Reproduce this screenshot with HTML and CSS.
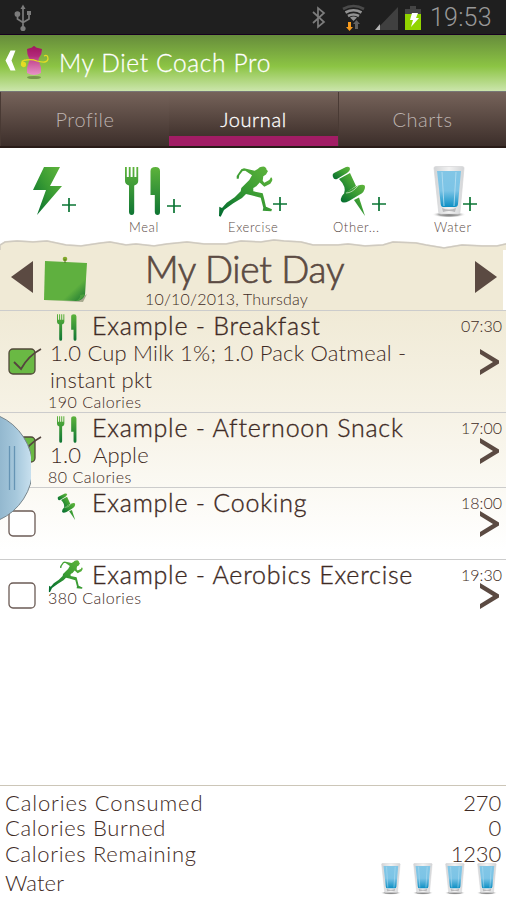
FILE: index.html
```html
<!DOCTYPE html>
<html lang="en">
<head>
<meta charset="utf-8">
<title>My Diet Coach Pro</title>
<link rel="stylesheet" href="styles.css">
</head>
<body>
<svg class="defs" width="0" height="0" aria-hidden="true">
  <defs>
    <linearGradient id="leaf" x1="1" y1="0" x2="0" y2="1"><stop offset="0" stop-color="#62b63d"/><stop offset=".45" stop-color="#3a9c33"/><stop offset="1" stop-color="#006a30"/></linearGradient>
    <linearGradient id="leafV" x1="0" y1="0" x2="0" y2="1"><stop offset="0" stop-color="#5db33b"/><stop offset="1" stop-color="#0f7534"/></linearGradient>
    <linearGradient id="aqua" x1="0" y1="0" x2="0" y2="1"><stop offset="0" stop-color="#82c6e6"/><stop offset=".55" stop-color="#7cc4e6"/><stop offset="1" stop-color="#0c8fc4"/></linearGradient>
    <linearGradient id="rim" x1="0" y1="0" x2="1" y2="0"><stop offset="0" stop-color="#d2d4d6"/><stop offset=".5" stop-color="#f2f2f2"/><stop offset="1" stop-color="#d2d4d6"/></linearGradient>
    <radialGradient id="shade"><stop offset="0" stop-color="#666"/><stop offset=".6" stop-color="#aaa"/><stop offset="1" stop-color="#fff" stop-opacity="0"/></radialGradient>
    <linearGradient id="pink" x1="0" y1="0" x2="0" y2="1"><stop offset="0" stop-color="#a0145f"/><stop offset=".35" stop-color="#b3297a"/><stop offset=".5" stop-color="#c54b94"/><stop offset="1" stop-color="#e794c6"/></linearGradient>
    <linearGradient id="note" x1="0" y1="0" x2="1" y2="1"><stop offset="0" stop-color="#5fb03f"/><stop offset=".7" stop-color="#5fb03f"/><stop offset=".92" stop-color="#278034"/><stop offset="1" stop-color="#6abf45"/></linearGradient>
    <linearGradient id="knob" x1="0" y1="0" x2="1" y2="0"><stop offset="0" stop-color="#92b7ce"/><stop offset=".5" stop-color="#a6c8dc"/><stop offset="1" stop-color="#cbe2f0"/></linearGradient>
    <symbol id="cutlery" viewBox="0 0 36 48"><path fill="url(#leafV)" d="M0 0h1.800v10h2V0h1.800v10h2V0h1.800v10h2V0h1.800v14q0 3-4 4.500V45q0 3-2.500 3t-2.700-3V18.500Q0 17 0 14zM25.500 4q0-4 5-4 4.500 0 4.500 4v41q0 3-2.500 3t-2.700-3V28h-4.300z"/></symbol>
    <symbol id="pin" viewBox="0 0 34 50"><g fill="url(#leaf)"><path d="M1 11Q0 8 2 7L14 1q4-1 4 2 0 2-3 4L5 13Q2 14 1 11z"/><path d="M7 13L18 7l6 13-12 8q3-7-5-15z"/><path d="M9 35Q8 30 14 26L25 20q8-3 8 1 0 5-6 8L17 35q-6 3-8 0z"/><path d="M22 34l5-2.500L33 50z"/></g><path d="M14 27q6 0 12-7" fill="none" stroke="#b6dbb0" stroke-width=".9"/></symbol>
    <symbol id="runner" viewBox="0 0 54 52"><path fill="url(#leaf)" d="M38.700 3Q41 .5 43 .7q3-.7 4.300 1.800l.4 1.500 1.300 1-2 3.500-2.700 1.800-.6 4.400 1.600 2 5-2.700 1.700-2.700q2 1 1 3.700l-1.700 2.800-6 3-4.600-4.300-3.400 3.800-3 1.700v3.300l9.400 2 1.600 6 1.700 7.400 6 2.600-.7 2-8.600-.6.600-3-2.600-9.900-9.400-2.500-5.300-1.300-4 4-8.700 5.300-6.600 4.700L5 44l-3.300 6.700L0 50l.3-9.300L3 42l4.700-5.300 8-5.400 6-6 .6-3.300 8-8 2.700-4.700-6.700-4.600-2.600.2-3.400 4.400-.6 3.400h-2v-2.700l4.600-6.700L25 2.300l10.700 2.500z"/></symbol>
    <symbol id="glass" viewBox="0 0 36 52"><ellipse cx="17" cy="48.500" rx="17" ry="3.200" fill="url(#shade)"/><path d="M2 2Q2 .5 4 .5h26Q32 .5 32 2l-4 44q-.3 2-2 2H9q-2 0-2.300-2z" fill="url(#rim)" stroke="#d5d5d7" stroke-width=".7"/><path d="M5 5h24l-3 33q-.2 3-3 3H11q-2 0-2.300-3z" fill="url(#aqua)"/><path d="M10 6l2 34M24 6l-2 34" stroke="#b9e1f3" stroke-width="1" opacity=".8"/><path d="M10 42q7 3 14 0l-1 4q-6-2-12 0z" fill="#b9b9bb"/></symbol>
  </defs>
</svg>
<main class="screen">
  <header class="status">
    <svg class="usb" width="18" height="28" viewBox="0 0 18 28" fill="none" stroke="#7c7c7c" stroke-width="1.700"><path d="M9 4v20M3.500 10v5L9 18.500M15 10v5L9 18.500"/><path d="M9 .5L11.500 5h-5z" fill="#7c7c7c" stroke="none"/><circle cx="3.400" cy="10" r="2" fill="#7c7c7c"/><path d="M13 7h4v4h-4z" fill="#7c7c7c" stroke="none"/><circle cx="9" cy="24.500" r="2.600" fill="#7c7c7c" stroke="none"/></svg>
    <svg class="icons" width="112" height="28" viewBox="0 0 112 28"><path d="M1 8l11 10-6 5V4l6 5L1 19" fill="none" stroke="#7c7c7c" stroke-width="1.700"/>
      <g fill="none" stroke-width="2.600"><path d="M31 5q10.500-6 21 0" stroke="#4a4a4a"/><path d="M33.500 8.500q8-4.500 16 0M36 12q5.500-3 11 0" stroke="#929292"/></g><path d="M38 13.500q3.500-2 7 0L41.500 17z" fill="#929292"/><path d="M36 18h3v5h2l-3.500 4-3.500-4h2z" fill="#f79a1c"/><path d="M43 25v-5h-2l3.500-4 3.500 4h-2v5z" fill="#626262"/>
      <path d="M64 26L86 3v23z" fill="#404040"/><path d="M63 26l5-6v6z" fill="#b5b5b5"/><path d="M98 2h6v3h5v6H93V5h5z" fill="#454545"/><path d="M93 10h16v16H93z" fill="#91d400"/><path d="M100 9h6l-2 5h3l-8 9 2-7h-3z" fill="#fff"/></svg>
    <time class="clock">19:53</time>
  </header>
  <div class="titlebar">
    <svg class="back" width="44" height="40" viewBox="0 0 44 40"><path d="M10.500 6.500h5L11.500 16.500l4 10h-5L5.500 16.500z" fill="#fff"/><ellipse cx="34" cy="33.500" rx="7" ry="1.600" fill="#63803c" opacity=".7"/><path d="M27 5l5-1.500q2-3 4 0L42 5q0 5-2.500 8-2 3 0 6 2 4 1.500 10-7 4-14 0-.5-6 1.500-10 2-3 0-6Q27 10 27 5z" fill="url(#pink)"/></svg>
    <svg class="ribbon" width="30" height="16" viewBox="0 0 30 16" fill="none" stroke="#e4dc24" stroke-width="1.300"><path d="M4 12Q-1 7 6 6q6-1 11 1 10 3 11-2 0-5-4-3"/><circle cx="3.500" cy="10.500" r="2" fill="#e4dc24"/></svg>
    <h1>My Diet Coach Pro</h1>
  </div>
  <nav class="tabs"><a>Profile</a><a class="active">Journal</a><a>Charts</a></nav>
  <section class="actions">
    <div class="action"><span class="pic"><svg width="30" height="50" viewBox="0 0 30 50"><path fill="url(#leaf)" d="M11 1h16L17 20h12L4 49l9-25H0z"/></svg><svg class="plus" width="14" height="14" viewBox="0 0 14 14"><path d="M7 0v14M0 7h14"/></svg></span><span></span></div>
    <div class="action meal"><span class="pic"><svg width="36" height="48"><use href="#cutlery"/></svg><svg class="plus" width="14" height="14" viewBox="0 0 14 14"><path d="M7 0v14M0 7h14"/></svg></span><span>Meal</span></div>
    <div class="action ex"><span class="pic"><svg width="54" height="52"><use href="#runner"/></svg><svg class="plus" width="14" height="14" viewBox="0 0 14 14"><path d="M7 0v14M0 7h14"/></svg></span><span>Exercise</span></div>
    <div class="action other"><span class="pic"><svg width="34" height="50"><use href="#pin"/></svg><svg class="plus" width="14" height="14" viewBox="0 0 14 14"><path d="M7 0v14M0 7h14"/></svg></span><span>Other...</span></div>
    <div class="action water"><span class="pic"><svg width="36" height="52"><use href="#glass"/></svg><svg class="plus" width="14" height="14" viewBox="0 0 14 14"><path d="M7 0v14M0 7h14"/></svg></span><span>Water</span></div>
  </section>
  <svg class="torn" width="506" height="11" viewBox="0 0 506 11"><path d="M0 6l5-3 12-1 16 1 14-1 19 4 15 1 20-3 9-1 16 3 10-1 18 2 13-2 20-2 17 2 22 0 15-3 20 1 13-2 10 1 17 1 12 3 25 0 10-1 17 2 18-1 10-3 23 1 10 2 18 3 18-3 20 1 15 0 9-2 15-2v9H0z" fill="#e9e6de" transform="translate(0 -1)"/><path d="M0 6l5-3 12-1 16 1 14-1 19 4 15 1 20-3 9-1 16 3 10-1 18 2 13-2 20-2 17 2 22 0 15-3 20 1 13-2 10 1 17 1 12 3 25 0 10-1 17 2 18-1 10-3 23 1 10 2 18 3 18-3 20 1 15 0 9-2 15-2v11H0z" fill="#f0ead6" stroke="#cfcac0" stroke-width="1.500"/></svg>
  <section class="day">
    <svg class="arrow" width="22" height="32" viewBox="0 0 22 32"><path d="M0 16L22 0v32z" fill="#5b4a42"/></svg>
    <svg class="note" width="45" height="48" viewBox="0 0 45 48"><path d="M1 44l34 1 9-7-4 8z" fill="#a6a98e"/><path d="M2 5L44 7l-2 32q-3 6-9 6L1 44z" fill="url(#note)"/><path d="M33 45q5-3 4-6l5-1q-3 6-9 7" fill="#4b9f3d"/><circle cx="22" cy="3" r="2.300" fill="#82a92c"/><path d="M22 3v4" stroke="#517323"/></svg>
    <div class="heading"><h2>My Diet Day</h2><p>10/10/2013, Thursday</p></div>
    <svg class="arrow next" width="22" height="32" viewBox="0 0 22 32"><path d="M22 16L0 0v32z" fill="#5b4a42"/></svg>
  </section>
  <section class="journal">
    <article class="entry first">
      <svg class="box" width="34" height="28" viewBox="0 0 34 28"><rect x="1" y="2" width="26" height="25" rx="4" fill="#6ab944" stroke="#51483a" stroke-width="1.300"/><path d="M6 15l7 7Q20 9 33 2" fill="none" stroke="#55453e" stroke-width="1.800"/></svg>
      <div class="body"><h3><svg class="food" width="20" height="27"><use href="#cutlery"/></svg>Example - Breakfast</h3><p class="desc">1.0 Cup Milk 1%; 1.0 Pack Oatmeal - instant pkt</p><p class="cal">190 Calories</p></div>
      <div class="side"><time>07:30</time><svg width="20" height="28" viewBox="0 0 20 28"><path d="M1 0l19 11.500v3L1 26v-5l13-8L1 5z" fill="#5b4a42"/></svg></div>
    </article>
    <article class="entry second">
      <svg class="box" width="34" height="28" viewBox="0 0 34 28"><rect x="1" y="2" width="26" height="25" rx="4" fill="#6ab944" stroke="#51483a" stroke-width="1.300"/><path d="M6 15l7 7Q20 9 33 2" fill="none" stroke="#55453e" stroke-width="1.800"/></svg>
      <div class="body"><h3><svg class="food" width="20" height="27"><use href="#cutlery"/></svg>Example - Afternoon Snack</h3><p class="desc">1.0&nbsp; Apple</p><p class="cal">80 Calories</p></div>
      <div class="side"><time>17:00</time><svg width="20" height="28" viewBox="0 0 20 28"><path d="M1 0l19 11.500v3L1 26v-5l13-8L1 5z" fill="#5b4a42"/></svg></div>
    </article>
    <article class="entry third">
      <svg class="box" width="34" height="28" viewBox="0 0 34 28"><rect x="1" y="2" width="26" height="25" rx="4" fill="#fff" stroke="#6b5b55" stroke-width="1.300"/></svg>
      <div class="body"><h3><svg class="tack" width="19" height="27"><use href="#pin"/></svg>Example - Cooking</h3></div>
      <div class="side"><time>18:00</time><svg width="20" height="28" viewBox="0 0 20 28"><path d="M1 0l19 11.500v3L1 26v-5l13-8L1 5z" fill="#5b4a42"/></svg></div>
    </article>
    <article class="entry fourth">
      <svg class="box" width="34" height="28" viewBox="0 0 34 28"><rect x="1" y="2" width="26" height="25" rx="4" fill="#fff" stroke="#6b5b55" stroke-width="1.300"/></svg>
      <div class="body"><h3><svg class="run" width="36" height="33"><use href="#runner"/></svg>Example - Aerobics Exercise</h3><p class="cal">380 Calories</p></div>
      <div class="side"><time>19:30</time><svg width="20" height="28" viewBox="0 0 20 28"><path d="M1 0l19 11.500v3L1 26v-5l13-8L1 5z" fill="#5b4a42"/></svg></div>
    </article>
  </section>
  <footer class="totals">
    <div><span>Calories Consumed</span><span class="num">270</span></div>
    <div class="tight"><span>Calories Burned</span><span class="num">0</span></div>
    <div class="tight"><span>Calories Remaining</span><span class="num">1230</span></div>
    <div class="drinks"><span>Water</span><span class="glasses"><svg width="23" height="32"><use href="#glass"/></svg><svg width="23" height="32"><use href="#glass"/></svg><svg width="23" height="32"><use href="#glass"/></svg><svg width="23" height="32"><use href="#glass"/></svg></span></div>
  </footer>
  <svg class="handle" width="31" height="106" viewBox="0 0 31 106"><path d="M-1 1A57 57 0 0 1-1 105z" fill="url(#knob)" stroke="#77858c"/><path d="M9.500 31v44M14.500 31v44" stroke="#6594b4" stroke-width="1.300"/></svg>
</main>
</body>
</html>
```
FILE: styles.css
```css
* { box-sizing: border-box; }
body { margin: 0; background: #fff; color: #3e2a24; font-family: Lato, "Open Sans", sans-serif; font-weight: 300; }
h1, h2, h3, p { margin: 0; font-weight: inherit; }
svg { display: block; flex: none; }
.defs { position: absolute; }
.screen { position: relative; width: 506px; height: 900px; overflow: hidden; display: flex; flex-direction: column; }
.status { height: 35px; flex: none; background: #1f1f1f; border-bottom: 1px solid #160020; display: flex; padding: 4px 13px 0 14px; }
.icons { margin-left: auto; }
.clock { font: 300 25px/28px Roboto, sans-serif; color: #999; width: 63px; margin-left: 6px; letter-spacing: .2px; }
.titlebar { position: relative; height: 57px; flex: none; display: flex; padding-top: 9px; background: linear-gradient(#668c3b, #8cc444 55%, #cbe5ab 98%, #777 99%); color: #fff; }
.back { margin-right: 15px; }
.ribbon { position: absolute; left: 20px; top: 19px; }
h1 { font-size: 24.500px; line-height: 37px; letter-spacing: .65px; -webkit-text-stroke: .3px #fff; }
.tabs { height: 56px; flex: none; display: grid; grid-template: 54px / 169px 169px 168px; border-bottom: 2px solid #291c18; background: #3c2e2a; }
.tabs a { text-align: center; font-size: 20px; line-height: 54px; letter-spacing: .6px; color: #bdb3b0; background: linear-gradient(#76635a, #3c2e2a); border-left: 1px solid #493a34; }
.tabs a.active { color: #fff; -webkit-text-stroke: .3px #fff; border-left: 0; border-bottom: 10px solid #a21d65; background: linear-gradient(#76635a, #42332e); }
.actions { height: 91px; flex: none; display: grid; grid-template-columns: 106px 97px 102px 110px 91px; padding-top: 18px; font-size: 13px; letter-spacing: .6px; color: #5b4b46; }
.action { padding-left: 33px; }
.pic { display: flex; height: 53px; }
.plus { margin: 32px 0 0 -1px; stroke: #0b7534; stroke-width: 1.700; }
.action > span:last-child { display: block; line-height: 16px; }
.meal { padding-left: 19px; }
.meal .pic { padding-top: 1px; }
.meal .plus { margin-left: 6px; }
.meal > span:last-child { padding-left: 4px; }
.ex { padding-left: 16px; }
.ex .plus { margin: 31px 0 0 0; }
.ex > span:last-child { padding-left: 9px; }
.other { padding-left: 27px; }
.other .plus { margin: 31px 0 0 6px; }
.other > span:last-child { padding-left: 1px; }
.water { padding-left: 17px; }
.water .plus { margin: 31px 0 0 -5px; }
.water > span:last-child { padding-left: 2px; }
.torn { margin: 0; height: 11px; }
.day { height: 60px; flex: none; background: #f0ead6; display: flex; padding: 11px 9px 0 11px; border-right: 3px solid #fff; }
.note { margin: -5px 0 0 10px; }
.heading { margin: -12px auto 0 57px; }
h2 { font-size: 37px; line-height: 40px; letter-spacing: -.3px; color: #5b4a42; -webkit-text-stroke: .7px #5b4a42; }
.heading p { font-size: 16px; line-height: 18px; letter-spacing: .2px; margin-top: 1px; }
.next { margin-right: -3px; }
.journal { height: 475px; flex: none; background: linear-gradient(#f0ead6, #f6f2e5 100px, #fff 240px); }
.entry { display: flex; border-top: 1px solid #ccc; position: relative; padding-left: 8px; }
.first { height: 102px; } .second { height: 75px; } .third { height: 72px; } .fourth { height: 80px; }
.box { margin-top: 36px; }
.second .box { margin-top: 22px; }
.third .box { margin-top: 21px; }
.fourth .box { margin-top: 21px; }
.body { flex: none; width: 400px; margin-left: 6px; }
h3 { position: relative; font-size: 25px; line-height: 30px; letter-spacing: .77px; padding-left: 44px; margin-top: -1px; white-space: nowrap; -webkit-text-stroke: .35px #3e2a24; }
.food { position: absolute; left: 9px; top: 4px; }
.tack { position: absolute; left: 9px; top: 6px; }
.run { position: absolute; left: 0; top: 1px; }
.desc { padding-left: 2px; width: 380px; font-size: 22px; line-height: 27px; letter-spacing: .2px; }
.first .desc { margin-top: -1px; }
.second .desc { margin-top: -1px; }
.cal { font-size: 16px; line-height: 17px; letter-spacing: .5px; }
.side { margin-left: auto; padding-right: 4px; }
.side time { display: block; font-size: 16px; line-height: 30px; }
.side svg { margin: 8px 0 0 18px; }
.second .side svg { margin-top: -5px; }
.third .side svg, .fourth .side svg { margin-top: -7px; }
.totals { padding: 4px 5px 0; border-top: 1px solid #ccc6b8; font-size: 22px; line-height: 25.300px; letter-spacing: .85px; }
.totals > div { display: flex; justify-content: space-between; }
.totals .tight { letter-spacing: .65px; }
.totals .num { letter-spacing: -.2px; }
.totals .drinks { letter-spacing: .1px; }
.drinks > span:first-child { margin-top: 4px; }
.glasses { display: flex; gap: 9px; margin: -3px 2px 0 0; }
.handle { position: absolute; left: 0; top: 415px; }
```
